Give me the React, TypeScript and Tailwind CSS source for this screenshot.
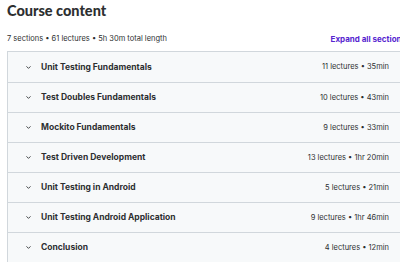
import React from "react";

const sections = [
  { title: "Unit Testing Fundamentals", meta: "11 lectures • 35min" },
  { title: "Test Doubles Fundamentals", meta: "10 lectures • 43min" },
  { title: "Mockito Fundamentals", meta: "9 lectures • 33min" },
  { title: "Test Driven Development", meta: "13 lectures • 1hr 20min" },
  { title: "Unit Testing in Android", meta: "5 lectures • 21min" },
  { title: "Unit Testing Android Application", meta: "9 lectures • 1hr 46min" },
  { title: "Conclusion", meta: "4 lectures • 12min" },
];

const Chevron = () => (
  <svg width="7" height="7" viewBox="0 0 24 24" fill="none" stroke="#2d2f31" strokeWidth="3" strokeLinecap="round" strokeLinejoin="round">
    <polyline points="6 9 12 15 18 9" />
  </svg>
);

const App = () => {
  return (
    <div className="w-[400px] h-[262px] overflow-hidden bg-white text-[#2d2f31]" style={{ fontFamily: "Inter, 'Noto Sans', sans-serif" }}>
      <div className="w-[399px] ml-[7px]">
        <h2 className="text-[14.5px] font-black leading-[20px] pt-[1px]" style={{ fontFamily: "Lato, sans-serif" }}>
          Course content
        </h2>

        <div className="flex items-center justify-between h-[16px] mt-[10px] mb-[4px]">
          <span className="text-[7.5px] text-[#2d2f31]">7 sections • 61 lectures • 5h 30m total length</span>
          <button className="text-[8px] font-bold text-[#5624d0]">Expand all sections</button>
        </div>

        {/* Sections */}
        <div className="border border-[#d1d7dc]">
          {sections.map((s, i) => (
            <div
              key={s.title}
              className={`flex items-center justify-between h-[30px] px-[16px] bg-[#f7f9fa] ${i > 0 ? "border-t border-[#d1d7dc]" : ""}`}
            >
              <div className="flex items-center gap-[9px] pl-[1px]">
                <Chevron />
                <span className="text-[8.5px] font-bold">{s.title}</span>
              </div>
              <span className="text-[7.5px] text-[#2d2f31]">{s.meta}</span>
            </div>
          ))}
        </div>
      </div>
    </div>
  );
};

export default App;
